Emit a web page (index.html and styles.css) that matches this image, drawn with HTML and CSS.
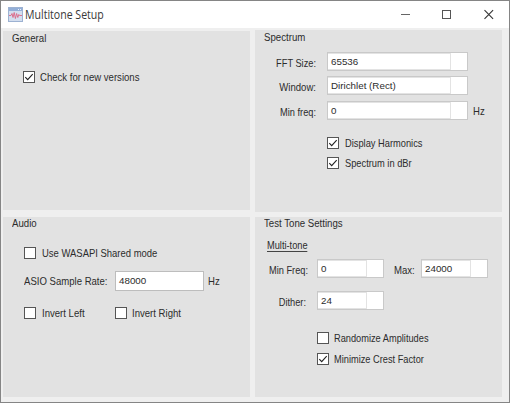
FILE: index.html
```html
<!DOCTYPE html>
<html lang="en">
<head>
<meta charset="utf-8">
<title>Multitone Setup</title>
<link rel="stylesheet" href="styles.css">
</head>
<body>
<div class="window">
  <header class="titlebar">
    <svg class="app-icon" width="15" height="15" viewBox="0 0 15 15">
      <rect x=".5" y=".5" width="14" height="14" fill="#d3deef" stroke="#9db2d2"/>
      <rect x="1" y="1" width="13" height="3" fill="#93afd8"/>
      <path d="M10 2.5h1M12 2.5h1" stroke="#e9f0fa"/>
      <path d="M1 8.5h2l1-2 1 4 1.2-5 1.2 6 1.2-5 1.2 4 1-3 .7 1H14" fill="none" stroke="#dc6686" stroke-width=".9"/>
    </svg>
    <h1 class="title">Multitone Setup</h1>
    <svg class="controls" width="94" height="11" viewBox="0 0 94 11">
      <path d="M0 5.5h9" stroke="#666"/>
      <rect x="41.5" y="1.5" width="8" height="8" fill="none" stroke="#555"/>
      <path d="M83.5 1.2l8.6 8.6M92.1 1.2l-8.6 8.6" stroke="#333" stroke-width="1.1"/>
    </svg>
  </header>
  <main class="panels">
    <section class="panel general">
      <h2 class="caption">General</h2>
      <label class="row check-row new-versions"><span class="box"><svg viewBox="0 0 12 12"><path d="M2.3 6.1l2.4 2.5 5-5.4"/></svg></span><span class="text">Check for new versions</span></label>
    </section>
    <section class="panel spectrum">
      <h2 class="caption">Spectrum</h2>
      <div class="row field fft"><span class="text label">FFT Size:</span><div class="combo wide"><span>65536</span></div></div>
      <div class="row field win"><span class="text label">Window:</span><div class="combo wide"><span>Dirichlet (Rect)</span></div></div>
      <div class="row field min"><span class="text label">Min freq:</span><div class="combo wide"><span>0</span></div><span class="text unit">Hz</span></div>
      <label class="row check-row harmonics"><span class="box"><svg viewBox="0 0 12 12"><path d="M2.3 6.1l2.4 2.5 5-5.4"/></svg></span><span class="text">Display Harmonics</span></label>
      <label class="row check-row dbr"><span class="box"><svg viewBox="0 0 12 12"><path d="M2.3 6.1l2.4 2.5 5-5.4"/></svg></span><span class="text">Spectrum in dBr</span></label>
    </section>
    <section class="panel audio">
      <h2 class="caption">Audio</h2>
      <label class="row check-row wasapi"><span class="box"></span><span class="text">Use WASAPI Shared mode</span></label>
      <div class="row rate"><span class="text rate-label">ASIO Sample Rate:</span><div class="input">48000</div><span class="text rate-unit">Hz</span></div>
      <div class="row inverts">
        <label class="check-row invert-left"><span class="box"></span><span class="text">Invert Left</span></label>
        <label class="check-row"><span class="box"></span><span class="text">Invert Right</span></label>
      </div>
    </section>
    <section class="panel tone">
      <h2 class="caption">Test Tone Settings</h2>
      <div class="row multi"><span class="text underlined">Multi-tone</span></div>
      <div class="row field freq"><span class="text label">Min Freq:</span><div class="combo"><span>0</span></div><span class="text max">Max:</span><div class="combo"><span>24000</span></div></div>
      <div class="row field dither"><span class="text label">Dither:</span><div class="combo"><span>24</span></div></div>
      <label class="row check-row random"><span class="box"></span><span class="text">Randomize Amplitudes</span></label>
      <label class="row check-row crest"><span class="box"><svg viewBox="0 0 12 12"><path d="M2.3 6.1l2.4 2.5 5-5.4"/></svg></span><span class="text">Minimize Crest Factor</span></label>
    </section>
  </main>
</div>
</body>
</html>
```
FILE: styles.css
```css
* { box-sizing: border-box; }
body { margin: 0; font-family: "Liberation Sans", Arial, sans-serif; color: #2c2c2c; }
h1, h2 { margin: 0; font-weight: 400; }

.window { width: 510px; height: 403px; border: 1px solid #858585; background: #efefef; display: flex; flex-direction: column; overflow: hidden; }
.titlebar { height: 27px; flex: none; background: #fff; display: flex; align-items: center; padding: 0 14px 0 7px; }
.app-icon { flex: none; }
.title { font: 12px/16px "Open Sans", "Noto Sans", sans-serif; margin-left: 2px; transform: scaleX(.88); transform-origin: left; color: #383838; white-space: nowrap; }
.controls { margin-left: auto; }

.panels { display: grid; grid-template-columns: 247px 247px; grid-template-rows: 182px 180px; gap: 5px; padding: 2px 0 0 2px; }
.panel { background: #e2e2e2; display: flex; flex-direction: column; align-items: flex-start; }
.general { margin: 1px 0 2px; }
.caption { font-size: 10px; line-height: 14px; height: 12px; margin-left: 9px; transform: scaleX(.965); transform-origin: left; white-space: nowrap; }
.general .caption { margin-top: 1px; }
.spectrum .caption { margin-top: 1px; }

.row { display: flex; align-items: center; flex: none; }
.text { font-size: 11px; line-height: 14px; white-space: nowrap; transform: scaleX(.87); transform-origin: left; }
.check-row { display: flex; align-items: center; height: 12px; }
.check-row .text { margin-left: 5px; }
.box { width: 12px; height: 12px; flex: none; border: 1px solid #555; background: #fff; }
.box svg { display: block; width: 12px; height: 12px; margin: -1px; }
.box path { fill: none; stroke: #222; stroke-width: 1.1; }

.field { height: 19px; }
.label { width: 61px; text-align: right; transform-origin: right; margin-right: 11px; position: relative; top: 1px; }
.combo { width: 67px; height: 19px; border: 1px solid #c9c9c9; background: #fff; display: grid; grid-template-columns: 1fr 16px; font-size: 9.8px; line-height: 15px; }
.combo.wide { width: 141px; }
.combo span { border: solid #e3e3e3; border-width: 1px 1px 1px 0; padding-left: 3px; }

.new-versions { margin: 27px 0 0 20px; }
.fft { margin-top: 9px; }
.fft .label { transform: scaleX(.84); }
.win { margin-top: 5px; }
.min { margin-top: 6px; }
.min .label { transform: scaleX(.84); }
.unit { margin-left: 5px; }
.harmonics { margin: 17px 0 0 72px; }
.dbr { margin: 8px 0 0 72px; }
.harmonics .text, .dbr .text { margin-left: 6px; transform: scaleX(.845); }

.wasapi { margin: 18px 0 0 21px; }
.wasapi .text { margin-left: 6px; transform: scaleX(.86); }
.rate { margin: 12px 0 0 21px; height: 20px; }
.rate-label { width: 91px; }
.input { width: 89px; height: 20px; border: 1px solid #bdbdbd; background: #fff; padding-left: 3px; font-size: 9.8px; line-height: 17px; }
.rate-unit { margin-left: 4px; }
.inverts { margin: 16px 0 0 21px; }
.invert-left { width: 91px; }
.invert-left .text { margin-left: 6px; }

.multi { height: 16px; margin: 8px 0 0 12px; }
.underlined { border-bottom: 1px solid #444; line-height: 12px; transform: scaleX(.84); }
.freq { margin-top: 6px; }
.tone .label { width: 53px; margin-right: 9px; transform: scaleX(.84); }
.tone .dither .label { width: 51px; margin-right: 11px; }
.max { width: 27px; margin: 0 0 0 10px; position: relative; top: 1px; }
.dither { margin-top: 13px; }
.random { margin: 22px 0 0 62px; }
.crest { margin: 9px 0 0 62px; }
.random .text, .crest .text { transform: scaleX(.84); }
```
